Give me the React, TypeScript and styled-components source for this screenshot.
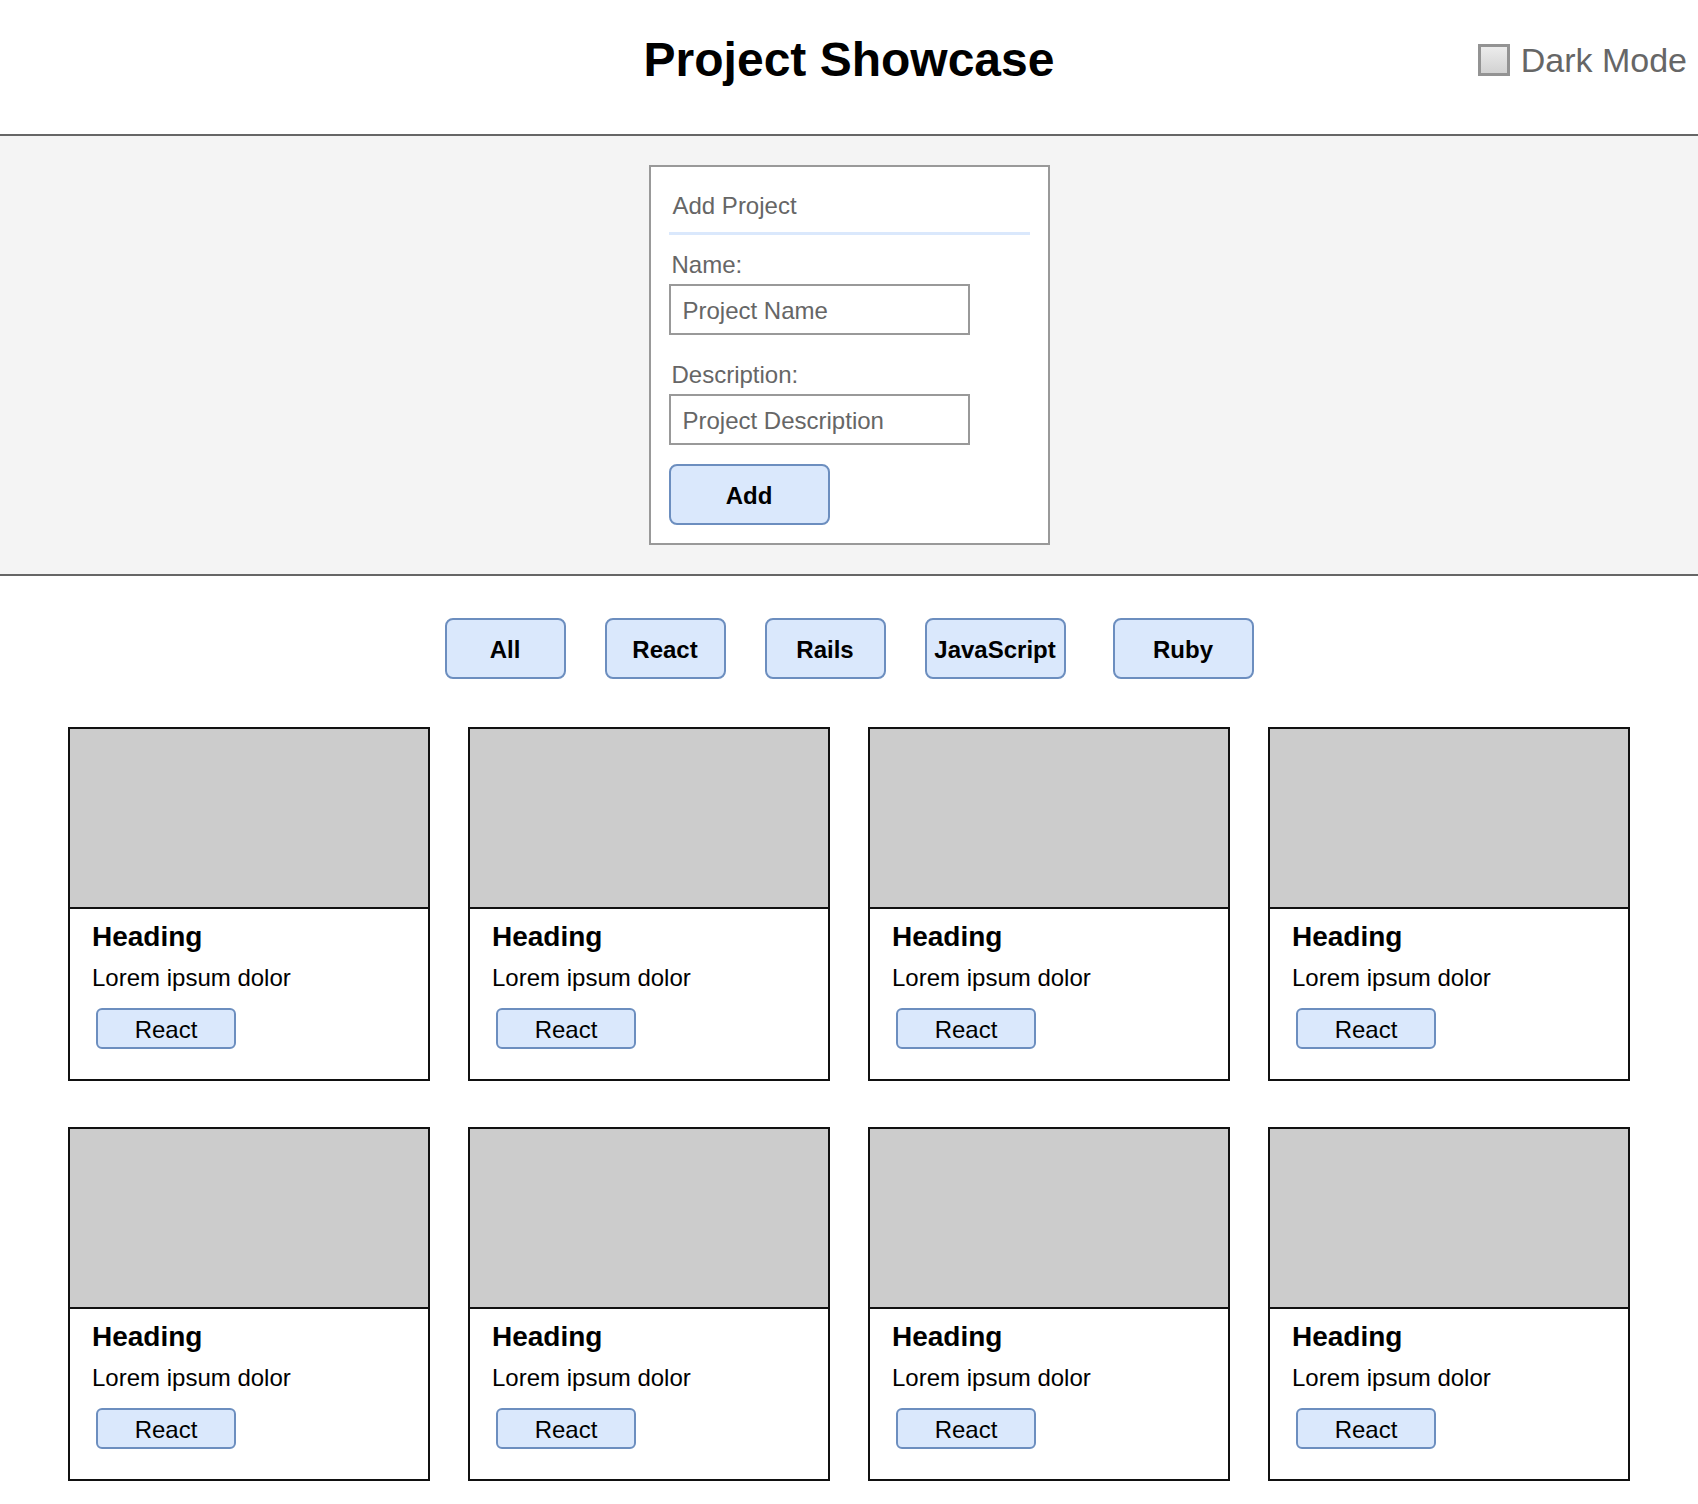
import styled, { createGlobalStyle } from "styled-components";

const GlobalStyle = createGlobalStyle`
  body {
    margin: 0;
    background: #fff;
    font-family: "Liberation Sans", Arial, Helvetica, sans-serif;
    color: #000;
  }
`;

const Header = styled.header`
  align-content: start;
  align-items: center;
  border-bottom: 2px solid #666;
  box-sizing: border-box;
  display: grid;
  grid-template-columns: 1fr auto 1fr;
  height: 136px;
  padding: 32px 11px 0;
`;

const Title = styled.h1`
  font-size: 48px;
  font-weight: 700;
  line-height: 56px;
  margin: 0;
`;

const Toggle = styled.label`
  align-items: center;
  color: #666;
  display: flex;
  font-size: 34px;
  gap: 11px;
  justify-self: end;
  line-height: 38px;
`;

const Checkbox = styled.input`
  appearance: none;
  background: linear-gradient(#ececec, #d2d2d2);
  border: 3px solid #939393;
  box-sizing: border-box;
  height: 32px;
  margin: 0;
  width: 32px;
`;

const FormSection = styled.section`
  background: #f4f4f4;
  border-bottom: 2px solid #666;
  display: flex;
  justify-content: center;
  padding: 29px 0;
`;

const FormBox = styled.form`
  align-items: flex-start;
  background: #fff;
  border: 2px solid #999;
  box-sizing: border-box;
  display: flex;
  flex-direction: column;
  padding: 25px 18px 18px;
  width: 401px;
`;

const FormTitle = styled.div`
  align-self: stretch;
  border-bottom: 3px solid #dae8fc;
  color: #666;
  font-size: 24px;
  line-height: 28px;
  margin-bottom: 16px;
  padding: 0 0 12px 4px;
`;

const Field = styled.div<{ $last?: boolean }>`
  display: flex;
  flex-direction: column;
  gap: 5px;
  margin-bottom: ${(p) => (p.$last ? "19px" : "26px")};
`;

const Label = styled.label`
  color: #666;
  font-size: 24px;
  line-height: 28px;
  padding-left: 3px;
`;

const Input = styled.input`
  border: 2px solid #999;
  border-radius: 0;
  box-sizing: border-box;
  color: #666;
  font-family: inherit;
  font-size: 24px;
  height: 51px;
  outline: none;
  padding: 3px 12px 0;
  width: 301px;

  &::placeholder {
    color: #666;
    opacity: 1;
  }
`;

const BlueButton = styled.button`
  background: #dae8fc;
  border: 2px solid #6c8ebf;
  border-radius: 8px;
  box-sizing: border-box;
  color: #000;
  font-family: inherit;
  font-size: 24px;
  font-weight: 700;
  padding: 2px 0 0;
`;

const AddButton = styled(BlueButton)`
  height: 61px;
  width: 161px;
`;

const Filters = styled.nav`
  display: flex;
  gap: 39px;
  justify-content: center;
  margin: 42px 0 48px;
`;

const FilterButton = styled(BlueButton)<{ $wide?: boolean; $spaced?: boolean }>`
  height: 61px;
  margin-left: ${(p) => (p.$spaced ? "8px" : "0")};
  width: ${(p) => (p.$wide ? "141px" : "121px")};
`;

const Grid = styled.main`
  column-gap: 38px;
  display: grid;
  grid-template-columns: repeat(4, 362px);
  justify-content: center;
  padding-bottom: 23px;
  row-gap: 46px;
`;

const Card = styled.article`
  background: #fff;
  border: 2px solid #111;
  box-sizing: border-box;
  height: 354px;
`;

const CardImage = styled.div`
  background: #ccc;
  border-bottom: 2px solid #111;
  height: 178px;
`;

const CardBody = styled.div`
  align-items: flex-start;
  display: flex;
  flex-direction: column;
  padding: 12px 21px 12px 22px;
`;

const CardHeading = styled.h3`
  font-size: 28px;
  font-weight: 700;
  line-height: 32px;
  margin: 0;
`;

const CardText = styled.p`
  font-size: 24px;
  line-height: 28px;
  margin: 11px 0 16px;
`;

const Tag = styled.span`
  align-items: center;
  background: #dae8fc;
  border: 2px solid #6c8ebf;
  border-radius: 6px;
  box-sizing: border-box;
  display: flex;
  font-size: 24px;
  height: 41px;
  justify-content: center;
  margin-left: 4px;
  padding-top: 2px;
  width: 140px;
`;

const filters = [
  { label: "All" },
  { label: "React" },
  { label: "Rails" },
  { label: "JavaScript", wide: true },
  { label: "Ruby", wide: true, spaced: true },
];

const projects = Array.from({ length: 8 }, (_, i) => ({
  id: i,
  heading: "Heading",
  text: "Lorem ipsum dolor",
  tag: "React",
}));

export default function App() {
  return (
    <>
      <GlobalStyle />
      <Header>
        <div />
        <Title>Project Showcase</Title>
        <Toggle>
          <Checkbox type="checkbox" />
          Dark Mode
        </Toggle>
      </Header>
      <FormSection>
        <FormBox onSubmit={(e) => e.preventDefault()}>
          <FormTitle>Add Project</FormTitle>
          <Field>
            <Label htmlFor="name">Name:</Label>
            <Input id="name" placeholder="Project Name" />
          </Field>
          <Field $last>
            <Label htmlFor="desc">Description:</Label>
            <Input id="desc" placeholder="Project Description" />
          </Field>
          <AddButton type="submit">Add</AddButton>
        </FormBox>
      </FormSection>
      <Filters>
        {filters.map((f) => (
          <FilterButton key={f.label} $wide={f.wide} $spaced={f.spaced}>
            {f.label}
          </FilterButton>
        ))}
      </Filters>
      <Grid>
        {projects.map((p) => (
          <Card key={p.id}>
            <CardImage />
            <CardBody>
              <CardHeading>{p.heading}</CardHeading>
              <CardText>{p.text}</CardText>
              <Tag>{p.tag}</Tag>
            </CardBody>
          </Card>
        ))}
      </Grid>
    </>
  );
}
